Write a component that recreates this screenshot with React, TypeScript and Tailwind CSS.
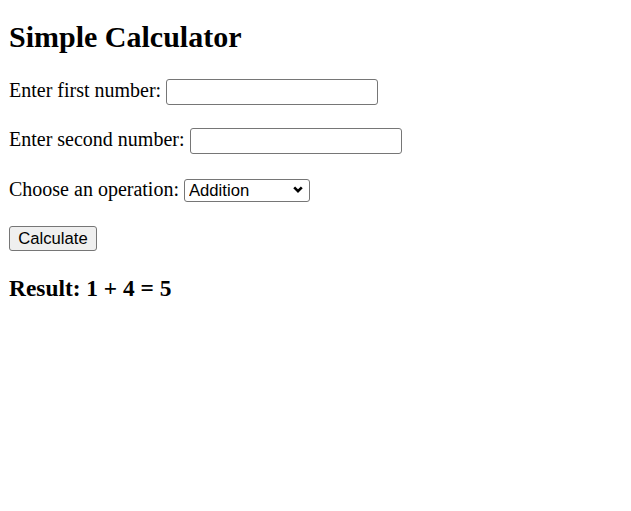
import { useState } from "react";

// Plain browser-default calculator form, shown at 125% zoom.
export default function App() {
  const [a, setA] = useState("");
  const [b, setB] = useState("");
  const [op, setOp] = useState("add");

  return (
    <div className="min-h-[511px] bg-white px-[9px] font-['Liberation_Serif',serif] text-black">
      <h2 className="pt-[20px] text-[30px] font-bold leading-[34px]">Simple Calculator</h2>

      <div className="mt-[25px] flex items-baseline gap-[5px] text-[20px] leading-[23px]">
        <label htmlFor="first">Enter first number:</label>
        <input
          id="first"
          value={a}
          onChange={(e) => setA(e.target.value)}
          className="h-[26px] w-[212px] rounded-[3px] border border-[#767676] bg-white px-[3px] font-['Liberation_Sans',sans-serif] text-[16.67px] outline-none"
        />
      </div>

      <div className="mt-[23px] flex items-baseline gap-[5px] text-[20px] leading-[23px]">
        <label htmlFor="second">Enter second number:</label>
        <input
          id="second"
          value={b}
          onChange={(e) => setB(e.target.value)}
          className="h-[26px] w-[212px] rounded-[3px] border border-[#767676] bg-white px-[3px] font-['Liberation_Sans',sans-serif] text-[16.67px] outline-none"
        />
      </div>

      <div className="mt-[24px] flex items-baseline gap-[5px] text-[20px] leading-[23px]">
        <label htmlFor="op">Choose an operation:</label>
        <div className="relative">
          <select
            id="op"
            value={op}
            onChange={(e) => setOp(e.target.value)}
            className="h-[23px] w-[126px] appearance-none rounded-[3px] border border-[#767676] bg-white pl-[4px] font-['Liberation_Sans',sans-serif] text-[16.67px] leading-[19px] outline-none"
          >
            <option value="add">Addition</option>
            <option value="sub">Subtraction</option>
            <option value="mul">Multiplication</option>
            <option value="div">Division</option>
          </select>
          <svg
            className="pointer-events-none absolute right-[7px] top-[8px]"
            width="10"
            height="7"
            viewBox="0 0 10 7"
            fill="none"
            stroke="black"
            strokeWidth="2.6"
          >
            <path d="M1.2 1.3 5 5.1 8.8 1.3" />
          </svg>
        </div>
      </div>

      <button className="mt-[24px] h-[25px] w-[88px] rounded-[3px] border border-[#767676] bg-[#efefef] font-['Liberation_Sans',sans-serif] text-[16.67px] leading-[19px]">
        Calculate
      </button>

      <h3 className="mt-[24px] text-[23.4px] font-bold leading-[27px]">Result: 1 + 4 = 5</h3>
    </div>
  );
}
